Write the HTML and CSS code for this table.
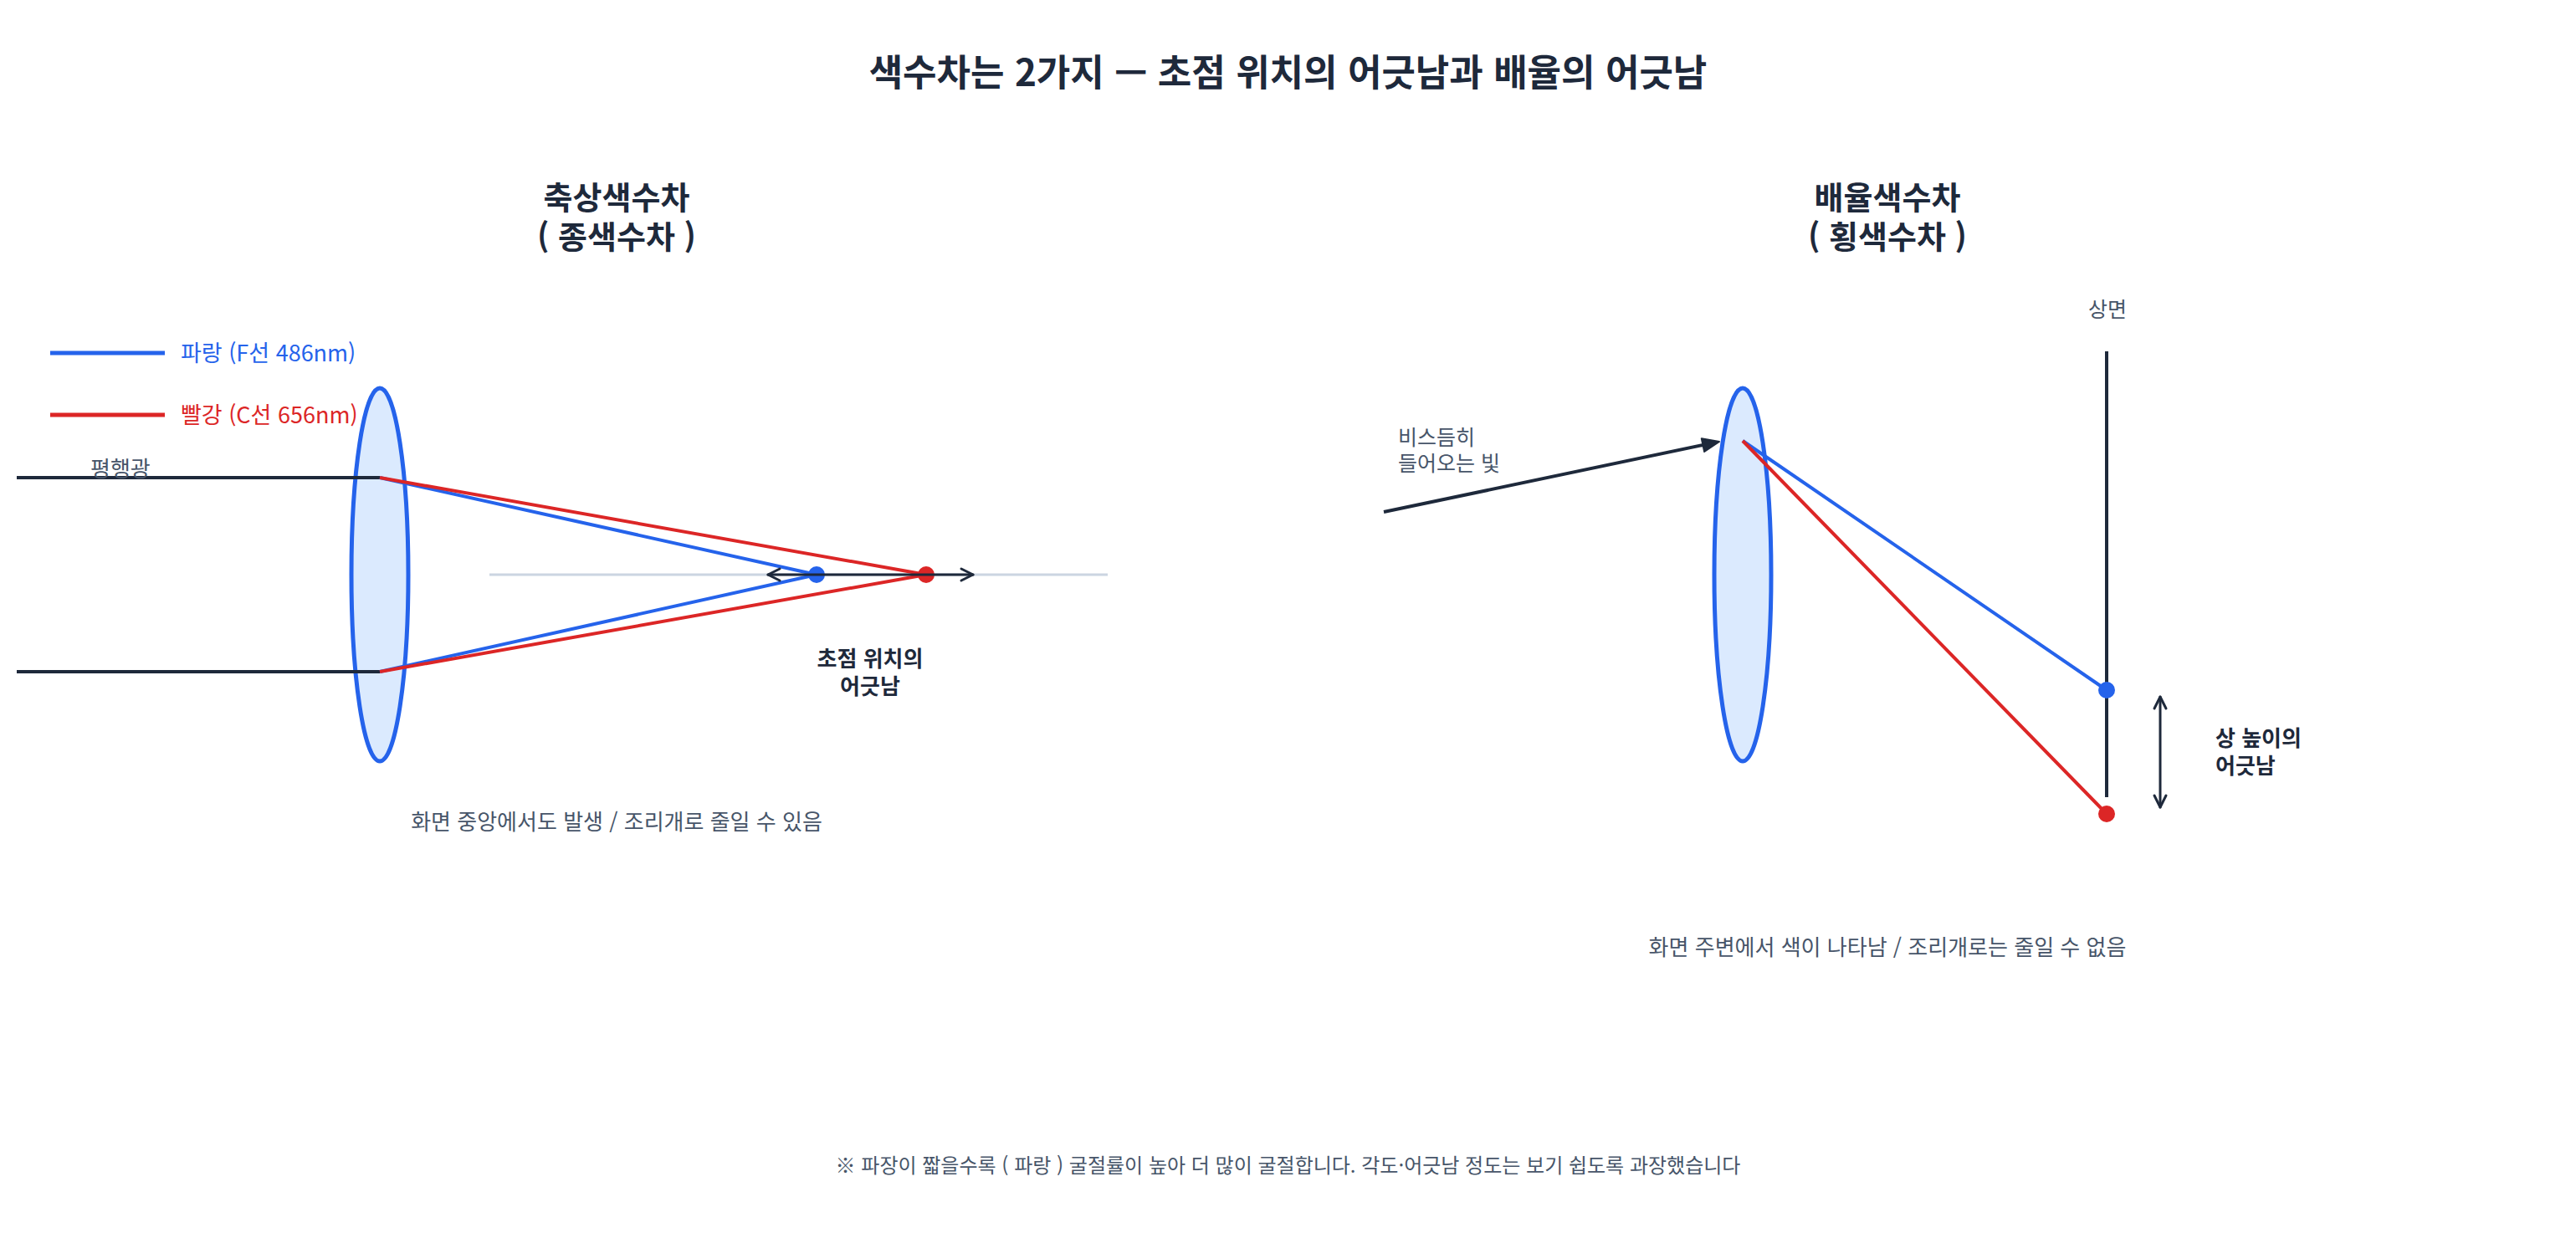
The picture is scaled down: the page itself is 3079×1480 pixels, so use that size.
FILE: index.html
```html
<!DOCTYPE html>
<html lang="ko">
<head>
<meta charset="utf-8">
<title>색수차는 2가지</title>
<link rel="stylesheet" href="styles.css">
</head>
<body>
<main class="page">
  <h1 class="title">색수차는 2가지 — 초점 위치의 어긋남과 배율의 어긋남</h1>
  <div class="panels">
    <section class="panel">
      <h2 class="panel-title"><span class="panel-title-line">축상색수차</span><span class="panel-title-line">( 종색수차 )</span></h2>
      <svg class="diagram diagram-axial" viewBox="0 0 1474 660" xmlns="http://www.w3.org/2000/svg">
        <line class="legend-blue" x1="60" y1="117" x2="197" y2="117"/>
        <text class="legend-text legend-text-blue" x="216" y="127">파랑 (F선 486nm)</text>
        <line class="legend-red" x1="60" y1="191" x2="197" y2="191"/>
        <text class="legend-text legend-text-red" x="216" y="201">빨강 (C선 656nm)</text>

        <line class="axis" x1="585" y1="382" x2="1324" y2="382"/>
        <ellipse class="lens" cx="454" cy="382" rx="34" ry="223"/>

        <line class="beam" x1="20" y1="266" x2="454" y2="266"/>
        <line class="beam" x1="20" y1="498" x2="454" y2="498"/>
        <text class="label label-lg" x="108" y="265">평행광</text>

        <polyline class="ray-blue" points="454,266 976,382 454,498"/>
        <polyline class="ray-red" points="454,266 1107,382 454,498"/>

        <circle class="dot-blue" cx="976" cy="382" r="10"/>
        <circle class="dot-red" cx="1107" cy="382" r="10"/>

        <line class="measure" x1="918" y1="382" x2="1163" y2="382"/>
        <polyline class="measure" points="932,375 918,382 932,389"/>
        <polyline class="measure" points="1149,375 1163,382 1149,389"/>

        <text class="label-strong" text-anchor="middle" x="1040" y="492">초점 위치의</text>
        <text class="label-strong" text-anchor="middle" x="1040" y="525">어긋남</text>
      </svg>
      <p class="caption">화면 중앙에서도 발생 / 조리개로 줄일 수 있음</p>
    </section>

    <section class="panel">
      <h2 class="panel-title"><span class="panel-title-line">배율색수차</span><span class="panel-title-line">( 횡색수차 )</span></h2>
      <svg class="diagram diagram-lateral" viewBox="0 0 1564 810" xmlns="http://www.w3.org/2000/svg">
        <text class="label" text-anchor="middle" x="1045" y="74">상면</text>
        <line class="plane" x1="1044" y1="115" x2="1044" y2="648"/>

        <text class="label" x="197" y="227">비스듬히</text>
        <text class="label" x="197" y="258">들어오는 빛</text>
        <ellipse class="lens" cx="609" cy="382" rx="34" ry="223"/>
        <line class="beam" x1="180" y1="307" x2="563" y2="226.7"/>
        <polygon class="arrow-head" points="581,223 563.1,234.9 559.8,219.3"/>

        <line class="ray-blue" x1="609" y1="222" x2="1044" y2="520"/>
        <line class="ray-red" x1="609" y1="222" x2="1044" y2="668"/>

        <circle class="dot-blue" cx="1044" cy="520" r="10"/>
        <circle class="dot-red" cx="1044" cy="668" r="10"/>

        <line class="measure" x1="1108" y1="528" x2="1108" y2="660"/>
        <polyline class="measure" points="1101,542 1108,528 1115,542"/>
        <polyline class="measure" points="1101,646 1108,660 1115,646"/>

        <text class="label-strong" x="1174" y="587">상 높이의</text>
        <text class="label-strong" x="1174" y="620">어긋남</text>
      </svg>
      <p class="caption">화면 주변에서 색이 나타남 / 조리개로는 줄일 수 없음</p>
    </section>
  </div>
  <p class="note">※ 파장이 짧을수록 ( 파랑 ) 굴절률이 높아 더 많이 굴절합니다. 각도·어긋남 정도는 보기 쉽도록 과장했습니다</p>
</main>
</body>
</html>
```

FILE: styles.css
```css
* {
  box-sizing: border-box;
}

html,
body {
  margin: 0;
  background: #ffffff;
}

body {
  font-family: "Noto Sans CJK KR", "Noto Sans", sans-serif;
  color: #1e293b;
}

.page {
  width: 3079px;
  padding-top: 58px;
}

.title {
  margin: 0;
  font-size: 44px;
  line-height: 52px;
  font-weight: 700;
  text-align: center;
  color: #1e293b;
}

.panels {
  display: grid;
  grid-template-columns: 1474px 1564px;
  align-items: start;
  margin-top: 100px;
}

.panel {
  display: flex;
  flex-direction: column;
  align-items: center;
}

.panel-title {
  display: flex;
  flex-direction: column;
  align-items: center;
  margin: 0 0 1px;
  font-size: 38px;
  line-height: 47px;
  font-weight: 700;
  text-align: center;
  color: #1e293b;
}

.panel-title-line {
  display: block;
  height: 47px;
  line-height: 47px;
}

.diagram {
  display: block;
  overflow: visible;
}

.diagram-axial {
  width: 1474px;
  height: 660px;
}

.diagram-lateral {
  width: 1564px;
  height: 810px;
}

.caption {
  margin: 0;
  font-size: 26px;
  line-height: 32px;
  color: #475569;
  text-align: center;
}

.note {
  margin: 230px 0 0;
  font-size: 24px;
  line-height: 30px;
  color: #475569;
  text-align: center;
}

/* diagram parts */
.legend-blue {
  stroke: #2563eb;
  stroke-width: 5;
}

.legend-red {
  stroke: #dc2626;
  stroke-width: 5;
}

.legend-text {
  font-family: "Noto Sans CJK KR", "Noto Sans", sans-serif;
  font-size: 27px;
}

.legend-text-blue {
  fill: #2563eb;
}

.legend-text-red {
  fill: #dc2626;
}

.axis {
  stroke: #cbd5e1;
  stroke-width: 3;
}

.beam {
  stroke: #1e293b;
  stroke-width: 4;
  fill: none;
}

.plane {
  stroke: #1e293b;
  stroke-width: 4;
}

.arrow-head {
  fill: #1e293b;
  stroke: #1e293b;
  stroke-width: 2;
  stroke-linejoin: round;
}

.lens {
  fill: #dbeafe;
  stroke: #2563eb;
  stroke-width: 5;
}

.ray-blue {
  stroke: #2563eb;
  stroke-width: 4;
  fill: none;
}

.ray-red {
  stroke: #dc2626;
  stroke-width: 4;
  fill: none;
}

.dot-blue {
  fill: #2563eb;
}

.dot-red {
  fill: #dc2626;
}

.measure {
  stroke: #1e293b;
  stroke-width: 3;
  fill: none;
  stroke-linecap: round;
  stroke-linejoin: round;
}

.label {
  font-family: "Noto Sans CJK KR", "Noto Sans", sans-serif;
  font-size: 25px;
  fill: #475569;
}

.label-lg {
  font-size: 26px;
}

.label-strong {
  font-family: "Noto Sans CJK KR", "Noto Sans", sans-serif;
  font-size: 26px;
  font-weight: 700;
  fill: #1e293b;
}
```
